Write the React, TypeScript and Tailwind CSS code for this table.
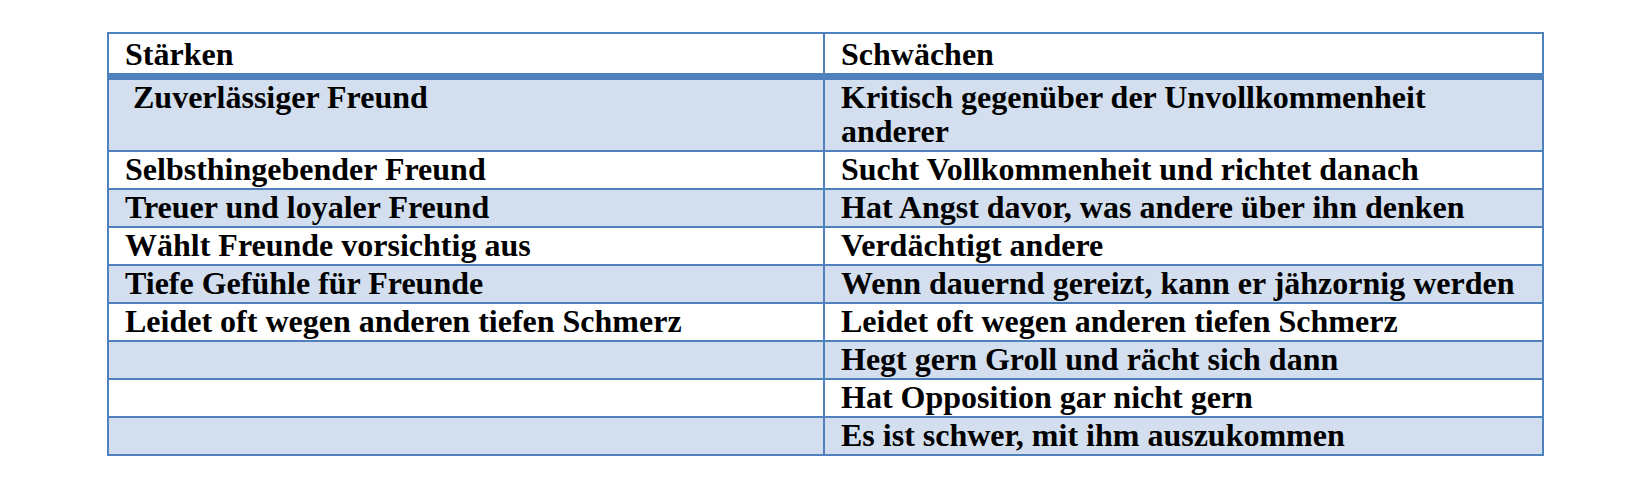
import React from 'react';

type Row = { left: string; right: React.ReactNode; tall?: boolean };

const rows: Row[] = [
  {
    left: '\u00a0Zuverlässiger Freund',
    right: (
      <>
        Kritisch gegenüber der Unvollkommenheit
        <br />
        anderer
      </>
    ),
    tall: true,
  },
  { left: 'Selbsthingebender Freund', right: 'Sucht Vollkommenheit und richtet danach' },
  { left: 'Treuer und loyaler Freund', right: 'Hat Angst davor, was andere über ihn denken' },
  { left: 'Wählt Freunde vorsichtig aus', right: 'Verdächtigt andere' },
  { left: 'Tiefe Gefühle für Freunde', right: 'Wenn dauernd gereizt, kann er jähzornig werden' },
  { left: 'Leidet oft wegen anderen tiefen Schmerz', right: 'Leidet oft wegen anderen tiefen Schmerz' },
  { left: '', right: 'Hegt gern Groll und rächt sich dann' },
  { left: '', right: 'Hat Opposition gar nicht gern' },
  { left: '', right: 'Es ist schwer, mit ihm auszukommen' },
];

export default function App() {
  return (
    <div className="min-h-[485px] bg-white pt-[32px] pl-[107px] font-['Liberation_Serif',serif] text-[32px] font-bold leading-[34px] text-black">
      <div className="w-[1437px] border-2 border-[#4f81bd]">
        {/* header */}
        <div className="flex border-b-[7px] border-[#4f81bd]">
          <div className="w-[716px] border-r-2 border-[#4f81bd] pl-4 pt-[3px] pb-[2px] whitespace-nowrap">Stärken</div>
          <div className="flex-1 pl-4 pt-[3px] pb-[2px] whitespace-nowrap">Schwächen</div>
        </div>

        {rows.map((r, i) => (
          <div
            key={i}
            className={
              'flex border-[#4f81bd] ' +
              (i < rows.length - 1 ? 'border-b-2 ' : '') +
              (i % 2 === 0 ? 'bg-[#d3dfee]' : 'bg-white')
            }
          >
            <div className={'w-[716px] border-r-2 border-[#4f81bd] pl-4 pb-[2px] whitespace-nowrap ' + (r.tall ? 'h-[70px]' : 'h-[36px]')}>
              {r.left}
            </div>
            <div className="flex-1 pl-4 pb-[2px] whitespace-nowrap">{r.right}</div>
          </div>
        ))}
      </div>
    </div>
  );
}
